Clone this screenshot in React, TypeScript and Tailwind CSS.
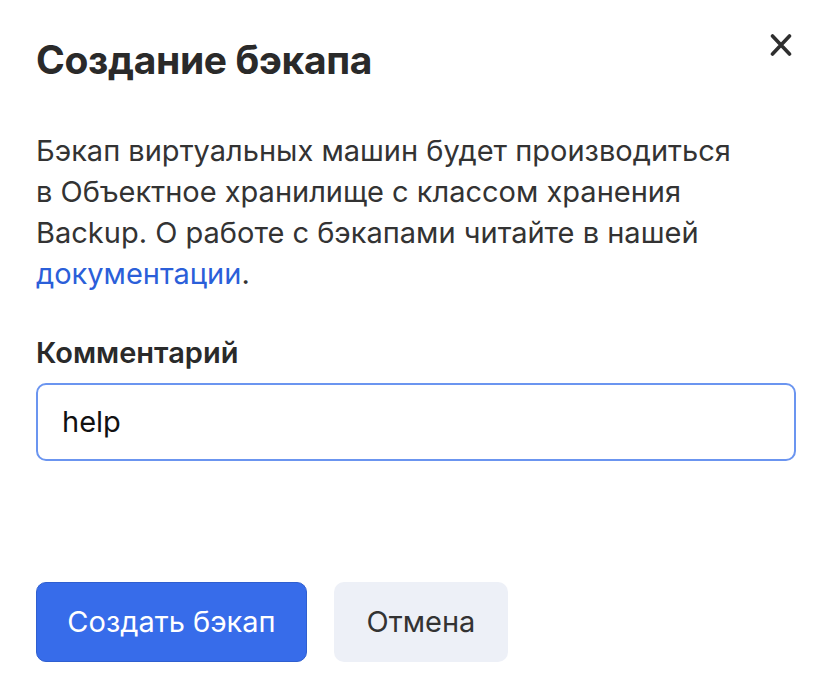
export default function App() {
  return (
    <div className="min-h-[674px] w-[826px] bg-white font-['Inter',sans-serif] text-[#2a2a2a]">
      <div className="flex flex-col px-[36px] pt-[36px]">
        <div className="flex items-start justify-between">
          <h1 className="text-[39px] font-bold leading-[48px] tracking-[-0.35px]">Создание бэкапа</h1>
          <button className="mr-[-2px] mt-[-3px] text-[#2f2f2f]">
            <svg width="22" height="24" viewBox="0 0 22 24" fill="none" stroke="currentColor" strokeWidth="3.6" strokeLinecap="round">
              <path d="M2.5 3L19.5 21M19.5 3L2.5 21" />
            </svg>
          </button>
        </div>
        <p className="mt-[46px] text-[29px] leading-[41px] text-[#333]">
          Бэкап виртуальных машин будет производиться
          <br />в Объектное хранилище с классом хранения
          <br />Backup. О работе с бэкапами читайте в нашей
          <br />
          <a className="text-[#2b5fd9]">документации</a>.
        </p>
        <label className="mt-[41px] text-[29px] font-semibold leading-[36px] text-[#2a2a2a]">Комментарий</label>
        <div className="mt-[12px] flex h-[78px] w-[760px] items-center rounded-[10px] border-2 border-[#6b95f0] px-[24px] text-[29px] text-[#111]">
          help
        </div>
        <div className="mt-[121px] flex gap-[27px]">
          <button className="h-[80px] w-[271px] rounded-[10px] border border-[#2f5fd0] bg-[#376cea] text-[29px] text-white">
            Создать бэкап
          </button>
          <button className="h-[80px] w-[174px] rounded-[10px] bg-[#edf0f7] text-[29px] text-[#333]">
            Отмена
          </button>
        </div>
      </div>
    </div>
  );
}
